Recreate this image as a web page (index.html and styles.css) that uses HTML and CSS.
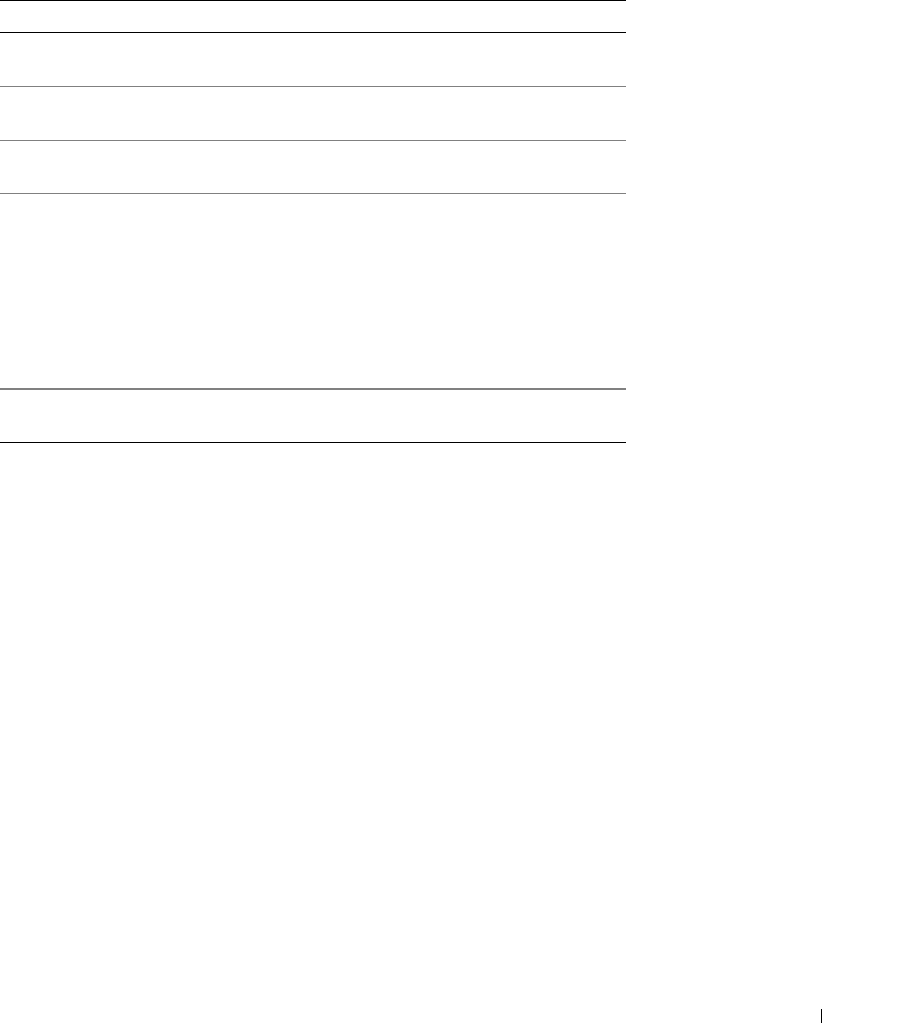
FILE: index.html
```html
<!DOCTYPE html>
<html lang="en">

<head>
    <meta charset="UTF-8">
    <meta name="viewport" content="width=device-width, initial-scale=1.0">
    <title>Table</title>
    <link rel="stylesheet" href="styles.css">
</head>

<body>
    <div class="page">
        <div class="table">
            <div class="table-head"></div>
            <div class="table-row"></div>
            <div class="table-row"></div>
            <div class="table-row short"></div>
            <div class="table-row tall"></div>
            <div class="table-row last"></div>
        </div>

        <footer class="page-footer">
            <span class="page-rule"></span>
        </footer>
    </div>
</body>

</html>
```

FILE: styles.css
```css
body {
    margin: 0;
    padding: 0;
    background-color: white;
    font-family: 'Liberation Sans', Arial, sans-serif;
    color: black;
}

.page {
    display: flex;
    flex-direction: column;
    height: 1023px;
    overflow: hidden;
}

.table {
    width: 626px;
    border-top: 1px solid black;
}

.table-head {
    height: 31px;
    border-bottom: 1px solid black;
}

.table-row {
    height: 53px;
    border-bottom: 1px solid #808080;
}

.table-row.short {
    height: 52px;
}

/* tall row ends with a heavier rule */
.table-row.tall {
    height: 194px;
    border-bottom: 2px solid #808080;
}

.table-row.last {
    height: 52px;
    border-bottom: 1px solid black;
}

.page-footer {
    margin-top: auto;
    display: flex;
    justify-content: flex-end;
    padding-right: 78px;
}

.page-rule {
    width: 0;
    height: 14px;
    border-left: 1px solid black;
}
```
